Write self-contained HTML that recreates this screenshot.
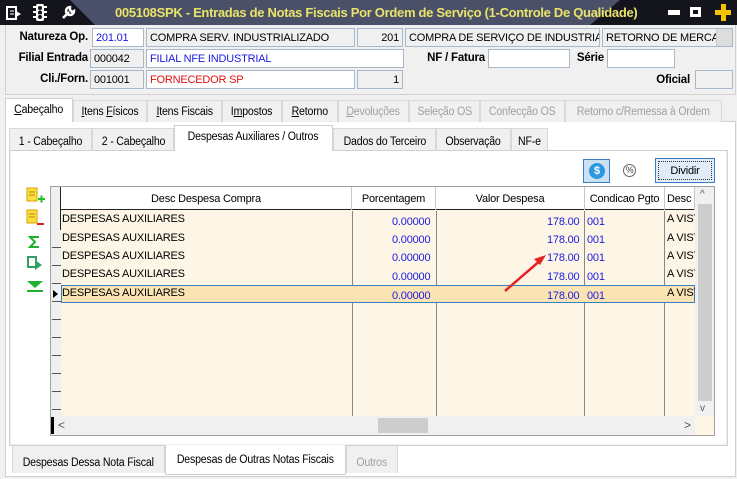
<!DOCTYPE html>
<html><head><meta charset="utf-8"><style>
*{box-sizing:border-box;margin:0;padding:0}
body{width:737px;height:479px;overflow:hidden;background:#f0f0f0;font-family:"Liberation Sans",sans-serif;font-size:11px;letter-spacing:-0.2px;color:#000;position:relative}
.a{position:absolute}
.tb{left:0;top:0;width:737px;height:25px;background:#14141c}
.inp{position:absolute;height:19px;border:1px solid #a8b8c8;background:#f0f0f0;padding:3px 3px;font-size:11px;white-space:nowrap;overflow:hidden}
.w{background:#fff}
.lbl{position:absolute;font-weight:bold;font-size:11.5px;text-align:right;white-space:nowrap}
.tab{position:absolute;height:22px;border:1px solid #d8d8d8;border-bottom:none;background:#f0f0f0;padding-top:5px;font-size:11.5px;white-space:nowrap;display:flex;justify-content:center;align-items:flex-start}
.tab span{display:inline-block;transform:scaleX(.92);transform-origin:center}
.dis{color:#a0a0a0}
.act{background:#fff;border-color:#d0d0d0}
.hdr{position:absolute;top:187px;height:23px;text-align:center;padding-top:6px;border-right:1px solid #c8c8c8;font-size:11px;white-space:nowrap}
.vl{position:absolute;top:211px;height:205px;width:1px;background:#888}
.cell{position:absolute;font-size:11px;white-space:nowrap}
.blue{color:#1a1ae0}
</style></head><body>
<div class="a tb">
 <svg class="a" style="left:0;top:0" width="737" height="25"><polygon points="70,0 620,0 590,25 95,25" fill="#4a5068"/></svg>
 <svg class="a" style="left:6px;top:5px" width="16" height="16"><rect x="1" y="2" width="9" height="12" fill="none" stroke="#fff" stroke-width="2"/><path d="M4 6h4M4 9h4" stroke="#fff"/><path d="M10 6l5 3-5 3z" fill="#fff"/></svg>
 <svg class="a" style="left:33px;top:3px" width="14" height="19"><rect x="3" y="1" width="8" height="17" rx="2" fill="#fff"/><circle cx="7" cy="5" r="2" fill="#14141c"/><circle cx="7" cy="9.5" r="2" fill="#14141c"/><circle cx="7" cy="14" r="2" fill="#14141c"/><path d="M0 4h3M0 9h3M0 14h3M11 4h3M11 9h3M11 14h3" stroke="#fff" stroke-width="2"/></svg>
 <svg class="a" style="left:61px;top:5px" width="15" height="15"><path d="M2 13l6-6M9 2a4 4 0 1 0 4 4l-2 1-2-2z" stroke="#fff" stroke-width="2.5" fill="none"/></svg>
 <div class="a" style="left:115px;top:5px;color:#eae36a;font-weight:bold;font-size:13px;letter-spacing:-0.3px;white-space:nowrap">005108SPK - Entradas de Notas Fiscais Por Ordem de Serviço (1-Controle De Qualidade)</div>
 <div class="a" style="left:668px;top:10px;width:12px;height:5px;background:#fff"></div>
 <div class="a" style="left:690px;top:7px;width:11px;height:10px;border:3px solid #fff"></div>
 <div class="a" style="left:715px;top:10px;width:16px;height:5px;background:#f5c400"></div>
 <div class="a" style="left:721px;top:4px;width:5px;height:17px;background:#f5c400"></div>
</div>
<div class="a" style="left:5px;top:25px;width:731px;height:70px;border:1px solid #d0d0d0;border-top:none"></div>
<div class="lbl" style="left:5px;top:31px;width:83px">Natureza Op.</div>
<div class="inp w blue" style="left:92px;top:28px;width:52px">201.01</div>
<div class="inp" style="left:146px;top:28px;width:209px">COMPRA SERV. INDUSTRIALIZADO</div>
<div class="inp" style="left:357px;top:28px;width:46px;text-align:right">201</div>
<div class="inp" style="left:405px;top:28px;width:195px">COMPRA DE SERVIÇO DE INDUSTRIAL</div>
<div class="inp" style="left:602px;top:28px;width:131px">RETORNO DE MERCAD</div>
<div class="a" style="left:716px;top:29px;width:16px;height:17px;background:#ddd;border-left:1px solid #ccc"></div>
<div class="lbl" style="left:5px;top:52px;width:83px">Filial Entrada</div>
<div class="inp" style="left:90px;top:49px;width:54px">000042</div>
<div class="inp w blue" style="left:146px;top:49px;width:258px">FILIAL NFE INDUSTRIAL</div>
<div class="lbl" style="left:420px;top:52px;width:65px">NF / Fatura</div>
<div class="inp w" style="left:488px;top:49px;width:82px"></div>
<div class="lbl" style="left:570px;top:52px;width:34px">Série</div>
<div class="inp w" style="left:607px;top:49px;width:68px"></div>
<div class="lbl" style="left:5px;top:73px;width:83px">Cli./Forn.</div>
<div class="inp" style="left:90px;top:70px;width:54px">001001</div>
<div class="inp w" style="left:146px;top:70px;width:209px;color:#e01010">FORNECEDOR SP</div>
<div class="inp" style="left:357px;top:70px;width:46px;text-align:right">1</div>
<div class="lbl" style="left:640px;top:74px;width:50px">Oficial</div>
<div class="inp" style="left:695px;top:70px;width:38px"></div>

<div class="a" style="left:5px;top:121px;width:731px;height:356px;border:1px solid #d0d0d0;background:#fff"></div>
<div class="tab act" style="left:5px;top:98px;width:68px;height:24px"><span><u>C</u>abeçalho</span></div>
<div class="tab" style="left:73px;top:100px;width:74px"><span><u>I</u>tens <u>F</u>ísicos</span></div>
<div class="tab" style="left:147px;top:100px;width:75px"><span><u>I</u>tens Fiscais</span></div>
<div class="tab" style="left:222px;top:100px;width:60px"><span>I<u>m</u>postos</span></div>
<div class="tab" style="left:282px;top:100px;width:56px"><span><u>R</u>etorno</span></div>
<div class="tab dis" style="left:338px;top:100px;width:71px"><span><u>D</u>evoluções</span></div>
<div class="tab dis" style="left:409px;top:100px;width:71px"><span>Seleção OS</span></div>
<div class="tab dis" style="left:480px;top:100px;width:85px"><span>Confecção OS</span></div>
<div class="tab dis" style="left:565px;top:100px;width:157px"><span>Retorno c/Remessa à Ordem</span></div>

<div class="a" style="left:9px;top:150px;width:719px;height:296px;background:#f0f0f0;border:1px solid #d0d0d0"></div>
<div class="tab" style="left:9px;top:128px;width:83px;padding-top:7px"><span>1 - Cabeçalho</span></div>
<div class="tab" style="left:92px;top:128px;width:82px;padding-top:7px"><span>2 - Cabeçalho</span></div>
<div class="tab act" style="left:174px;top:125px;width:159px;height:26px"><span>Despesas Auxiliares / Outros</span></div>
<div class="tab" style="left:333px;top:128px;width:103px;padding-top:7px"><span>Dados do Terceiro</span></div>
<div class="tab" style="left:436px;top:128px;width:75px;padding-top:7px"><span>Observação</span></div>
<div class="tab" style="left:511px;top:128px;width:37px;padding-top:7px"><span>NF-e</span></div>
<div class="a" style="left:11px;top:151px;width:715px;height:293px;background:#fff"></div>

<div class="a" style="left:583px;top:159px;width:27px;height:24px;background:#cce0f4;border:1px solid #3c7fc0"></div>
<div class="a" style="left:589px;top:163px;width:16px;height:16px;border-radius:50%;background:#2a98e0;color:#fff;font-weight:bold;font-size:11px;text-align:center;line-height:16px">$</div>
<div class="a" style="left:623px;top:164px;width:13px;height:13px;border-radius:50%;border:1px solid #666;font-size:9px;text-align:center;line-height:11px;color:#444">%</div>
<div class="a" style="left:655px;top:158px;width:60px;height:25px;background:#e0ecf8;border:1px solid #3c7fc0;text-align:center;padding-top:6px"><div class="a" style="left:2px;top:2px;right:2px;bottom:2px;border:1px dotted #333"></div>Dividir</div>

<svg class="a" style="left:24px;top:185px" width="24" height="110">
 <rect x="3" y="3" width="10" height="13" fill="#f8e040" stroke="#e0a000"/><path d="M5 7h6M5 10h6" stroke="#c08000"/><path d="M14 14h7M17.5 10.5v7" stroke="#20c020" stroke-width="2"/>
 <rect x="3" y="25" width="10" height="13" fill="#f8e040" stroke="#e0a000"/><path d="M5 29h6M5 32h6" stroke="#c08000"/><path d="M13 39h7" stroke="#e02020" stroke-width="2"/>
 <path d="M15 52H6l5 5-5 5h9" stroke="#20b030" stroke-width="2" fill="none"/>
 <path d="M4 72h8v10H4z" fill="none" stroke="#30a060" stroke-width="2"/><path d="M11 75l7 5-7 5z" fill="#30a060"/>
 <path d="M3 96h16L11 103z" fill="#20b030"/><path d="M3 106h16" stroke="#20b030" stroke-width="2"/>
</svg>

<div class="a" style="left:50px;top:186px;width:665px;height:250px;background:#fdf6e6;border:1px solid #a0a0a0"></div>
<div class="a" style="left:51px;top:187px;width:644px;height:23px;background:#fff;border-bottom:1px solid #222"></div>
<div class="a" style="left:51px;top:187px;width:10px;height:248px;background:#f0f0f0;border-right:1px solid #222"></div>
<div class="hdr" style="left:61px;width:291px">Desc Despesa Compra</div>
<div class="hdr" style="left:352px;width:84px">Porcentagem</div>
<div class="hdr" style="left:436px;width:149px">Valor Despesa</div>
<div class="hdr" style="left:585px;width:80px">Condicao Pgto</div>
<div class="hdr" style="left:665px;width:30px;text-align:left;padding-left:2px;overflow:hidden">Desc C</div>
<div class="vl" style="left:352px"></div><div class="vl" style="left:436px"></div><div class="vl" style="left:584px"></div><div class="vl" style="left:664px"></div>
<div class="a" style="left:61px;top:285px;width:634px;height:18px;background:#fbe4b4;border:1px solid #3c7fc0"></div>
<div class="a" style="left:52px;top:230px;width:9px;height:186px;background:repeating-linear-gradient(#f0f0f0 0 17px,#555 17px 18px)"></div>
<div class="a" style="left:53px;top:290px;width:0;height:0;border-left:5px solid #000;border-top:4px solid transparent;border-bottom:4px solid transparent"></div>

<div class="cell" style="left:62px;top:213px">DESPESAS AUXILIARES</div><div class="cell blue" style="left:392px;top:216px">0.00000</div><div class="cell blue" style="left:547px;top:216px">178.00</div><div class="cell blue" style="left:587px;top:216px">001</div><div class="cell" style="left:667px;top:213px;width:28px;overflow:hidden">A VISTA</div>
<div class="cell" style="left:62px;top:232px">DESPESAS AUXILIARES</div><div class="cell blue" style="left:392px;top:234px">0.00000</div><div class="cell blue" style="left:547px;top:234px">178.00</div><div class="cell blue" style="left:587px;top:234px">001</div><div class="cell" style="left:667px;top:232px;width:28px;overflow:hidden">A VISTA</div>
<div class="cell" style="left:62px;top:250px">DESPESAS AUXILIARES</div><div class="cell blue" style="left:392px;top:252px">0.00000</div><div class="cell blue" style="left:547px;top:252px">178.00</div><div class="cell blue" style="left:587px;top:252px">001</div><div class="cell" style="left:667px;top:250px;width:28px;overflow:hidden">A VISTA</div>
<div class="cell" style="left:62px;top:268px">DESPESAS AUXILIARES</div><div class="cell blue" style="left:392px;top:271px">0.00000</div><div class="cell blue" style="left:547px;top:271px">178.00</div><div class="cell blue" style="left:587px;top:271px">001</div><div class="cell" style="left:667px;top:268px;width:28px;overflow:hidden">A VISTA</div>
<div class="cell" style="left:62px;top:287px">DESPESAS AUXILIARES</div><div class="cell blue" style="left:392px;top:290px">0.00000</div><div class="cell blue" style="left:547px;top:290px">178.00</div><div class="cell blue" style="left:587px;top:290px">001</div><div class="cell" style="left:667px;top:287px;width:28px;overflow:hidden">A VISTA</div>

<svg class="a" style="left:500px;top:250px" width="50" height="45"><path d="M5 41L42 9" stroke="#e82020" stroke-width="2.5"/><path d="M46 5l-12 4 6 6z" fill="#e82020"/></svg>

<div class="a" style="left:695px;top:187px;width:19px;height:229px;background:#f0f0f0"></div>
<div class="a" style="left:698px;top:204px;width:14px;height:197px;background:#cdcdcd"></div>
<div class="a" style="left:700px;top:189px;font-size:10px;color:#555">^</div>
<div class="a" style="left:700px;top:403px;font-size:10px;color:#555">v</div>
<div class="a" style="left:51px;top:416px;width:644px;height:19px;background:#f0f0f0"></div>
<div class="a" style="left:51px;top:417px;width:3px;height:17px;background:#000"></div>
<div class="a" style="left:378px;top:418px;width:50px;height:15px;background:#cdcdcd"></div>
<div class="a" style="left:58px;top:418px;color:#555;font-size:12px">&lt;</div>
<div class="a" style="left:684px;top:418px;color:#555;font-size:12px">&gt;</div>

<div class="tab" style="left:12px;top:446px;width:153px;height:27px;padding-top:11px;border-top:none"><span>Despesas Dessa Nota Fiscal</span></div>
<div class="tab act" style="left:165px;top:445px;width:181px;height:30px;padding-top:9px;border:1px solid #d0d0d0;border-top:none"><span>Despesas de Outras Notas Fiscais</span></div>
<div class="tab dis" style="left:346px;top:446px;width:52px;height:27px;padding-top:11px;border-top:none"><span>Outros</span></div>
</body></html>
